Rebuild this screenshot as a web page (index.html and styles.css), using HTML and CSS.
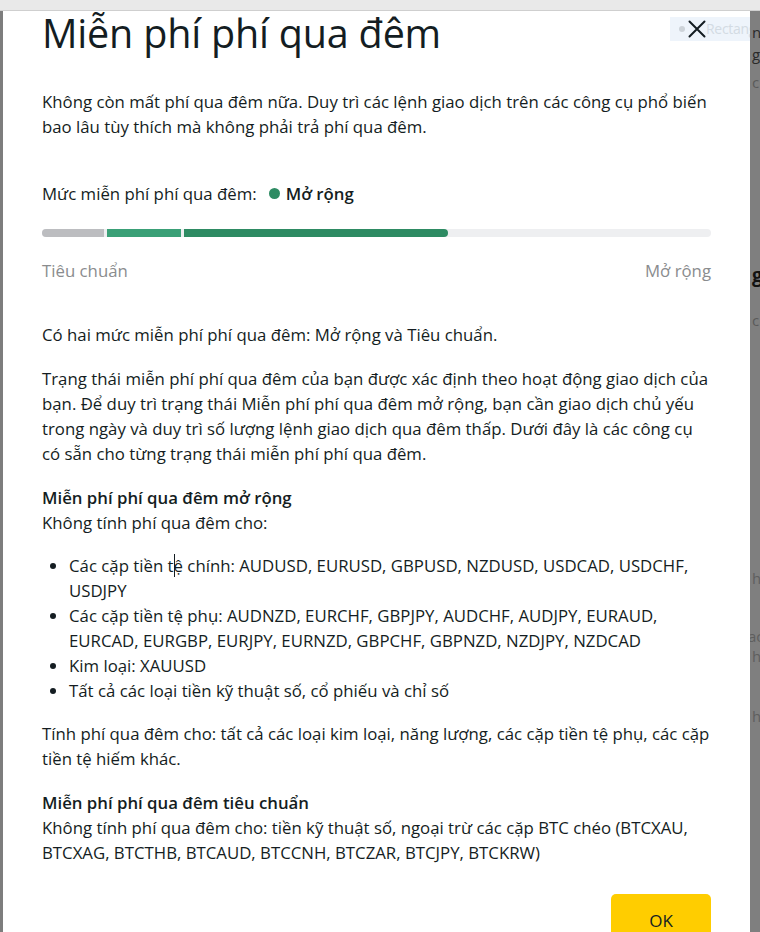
FILE: index.html
```html
<!DOCTYPE html>
<html lang="vi">
<head>
<meta charset="utf-8">
<title>Miễn phí phí qua đêm</title>
<link rel="stylesheet" href="styles.css">
</head>
<body>
<div class="topstrip"></div>
<div class="stage">
  <div class="edge-left"></div>
  <div class="modal">
    <div class="modal-head">
      <h1 class="title">Miễn phí phí qua đêm</h1>
      <button class="close" aria-label="Đóng">
        <svg width="18" height="18" viewBox="0 0 18 18"><path d="M1.5 1.5 L16.5 16.5 M16.5 1.5 L1.5 16.5" stroke="#141d22" stroke-width="2" stroke-linecap="round"/></svg>
      </button>
      <div class="inspect-tag"><span class="inspect-dot"></span><span class="inspect-text">Rectang</span></div>
    </div>
    <p class="lead">Không còn mất phí qua đêm nữa. Duy trì các lệnh giao dịch trên các công cụ phổ biến bao lâu tùy thích mà không phải trả phí qua đêm.</p>
    <div class="level">
      <span class="level-label">Mức miễn phí phí qua đêm:</span>
      <span class="level-dot"></span>
      <span class="level-value">Mở rộng</span>
    </div>
    <div class="bar">
      <div class="seg seg-gray"></div>
      <div class="seg seg-green1"></div>
      <div class="seg seg-green2"></div>
    </div>
    <div class="bar-labels">
      <span>Tiêu chuẩn</span>
      <span>Mở rộng</span>
    </div>
    <div class="content">
      <p>Có hai mức miễn phí phí qua đêm: Mở rộng và Tiêu chuẩn.</p>
      <p>Trạng thái miễn phí phí qua đêm của bạn được xác định theo hoạt động giao dịch của bạn. Để duy trì trạng thái Miễn phí phí qua đêm mở rộng, bạn cần giao dịch chủ yếu trong ngày và duy trì số lượng lệnh giao dịch qua đêm thấp. Dưới đây là các công cụ có sẵn cho từng trạng thái miễn phí phí qua đêm.</p>
      <p class="tight"><strong>Miễn phí phí qua đêm mở rộng</strong><br>Không tính phí qua đêm cho:</p>
      <ul>
        <li>Các cặp tiền <span class="caret">t</span>ệ chính: AUDUSD, EURUSD, GBPUSD, NZDUSD, USDCAD, USDCHF, USDJPY</li>
        <li>Các cặp tiền tệ phụ: AUDNZD, EURCHF, GBPJPY, AUDCHF, AUDJPY, EURAUD, EURCAD, EURGBP, EURJPY, EURNZD, GBPCHF, GBPNZD, NZDJPY, NZDCAD</li>
        <li>Kim loại: XAUUSD</li>
        <li>Tất cả các loại tiền kỹ thuật số, cổ phiếu và chỉ số</li>
      </ul>
      <p>Tính phí qua đêm cho: tất cả các loại kim loại, năng lượng, các cặp tiền tệ phụ, các cặp tiền tệ hiếm khác.</p>
      <p><strong>Miễn phí phí qua đêm tiêu chuẩn</strong><br>Không tính phí qua đêm cho: tiền kỹ thuật số, ngoại trừ các cặp BTC chéo (BTCXAU, BTCXAG, BTCTHB, BTCAUD, BTCCNH, BTCZAR, BTCJPY, BTCKRW)</p>
    </div>
    <div class="actions">
      <button class="ok">OK</button>
    </div>
  </div>
  <div class="edge-right">
    <span class="ghost g1">n</span>
    <span class="ghost g2">g</span>
    <span class="ghost g3">c</span>
    <span class="ghost g4">g</span>
    <span class="ghost g5">c</span>
    <span class="ghost g6">h</span>
    <span class="ghost g7">ac</span>
    <span class="ghost g8">h</span>
    <span class="ghost g9">h</span>
  </div>
</div>
</body>
</html>
```
FILE: styles.css
```css
html, body {
  margin: 0;
  padding: 0;
  height: 100%;
  overflow: hidden;
  background: #7f7f7f;
  font-family: "Open Sans", "Noto Sans", sans-serif;
  color: #141d22;
}
.topstrip {
  height: 10px;
  background: #e9e9e9;
  border-bottom: 1px solid #cfcfcf;
}
.stage {
  display: flex;
  height: 921px;
}
.edge-left {
  width: 3px;
  background: #7d7d7d;
  flex: none;
}
.modal {
  width: 747px;
  flex: none;
  background: #ffffff;
  padding: 0 39px;
  box-sizing: border-box;
  position: relative;
}
.modal-head {
  position: relative;
  height: 44px;
}
.title {
  margin: 0;
  font-size: 39.5px;
  font-weight: 500;
  line-height: 44px;
  letter-spacing: -0.2px;
}
.close {
  position: absolute;
  right: 5px;
  top: 9px;
  background: none;
  border: 0;
  padding: 0;
  width: 18px;
  height: 18px;
  z-index: 2;
  cursor: pointer;
}
.inspect-tag {
  position: absolute;
  left: 628px;
  top: 6px;
  width: 80px;
  height: 24px;
  background: #eef4fb;
  color: #d3dbe3;
  font-size: 14px;
  line-height: 24px;
  padding-left: 9px;
  box-sizing: border-box;
  white-space: nowrap;
  overflow: hidden;
  display: flex;
  align-items: center;
}
.inspect-dot {
  width: 6px;
  height: 6px;
  border-radius: 50%;
  background: #cdd3d9;
  flex: none;
}
.inspect-text {
  margin-left: 21px;
  letter-spacing: -0.3px;
}
.lead {
  margin: 34px 0 0;
  font-size: 16.8px;
  line-height: 25px;
}
.level {
  display: flex;
  align-items: center;
  margin-top: 42px;
  font-size: 16.8px;
  line-height: 25px;
}
.level-dot {
  width: 11px;
  height: 11px;
  border-radius: 50%;
  background: #2e8b63;
  margin: 0 6px 0 12px;
}
.level-value {
  font-weight: 600;
}
.bar {
  margin-top: 23px;
  height: 8px;
  background: #eeeff1;
  border-radius: 4px;
  display: flex;
  gap: 3px;
  overflow: hidden;
}
.seg {
  height: 100%;
}
.seg-gray {
  width: 62px;
  background: #bcbdc0;
}
.seg-green1 {
  width: 74px;
  background: #3aa077;
}
.seg-green2 {
  width: 264px;
  background: #2e8b63;
  border-radius: 0 4px 4px 0;
}
.bar-labels {
  display: flex;
  justify-content: space-between;
  margin-top: 21px;
  font-size: 16.8px;
  line-height: 25px;
  color: #8a8c8e;
}
.content {
  margin-top: 39px;
  font-size: 16.8px;
  line-height: 25px;
}
.content p {
  margin: 0 0 19px;
}
.content p.tight {
  margin-bottom: 18px;
}
.content strong {
  font-weight: 600;
}
.content ul {
  margin: 0 0 18px;
  padding-left: 27px;
}
.caret {
  box-shadow: 1px 0 0 #141d22;
}
.actions {
  display: flex;
  justify-content: flex-end;
  margin-top: 29px;
}
.ok {
  width: 100px;
  height: 52px;
  background: #ffcd00;
  border: 0;
  border-radius: 5px;
  font-family: inherit;
  font-size: 17px;
  color: #141d22;
  padding: 0;
  cursor: pointer;
}
.edge-right {
  flex: 1;
  position: relative;
  background: #7f7f7f;
  overflow: hidden;
}
.ghost {
  position: absolute;
  left: 2px;
  font-size: 15px;
  color: #2a2a2a;
  line-height: 14px;
}
.g1 { top: 14px; }
.g2 { top: 36px; }
.g3 { top: 64px; color: #5a5a5a; }
.g4 { top: 255px; color: #111; font-weight: 700; font-size: 19px; line-height: 18px; }
.g5 { top: 302px; color: #5a5a5a; }
.g6 { top: 560px; color: #5e5e5e; }
.g7 { top: 618px; color: #5e5e5e; left: -2px; }
.g8 { top: 638px; color: #5e5e5e; }
.g9 { top: 698px; color: #5e5e5e; }
```
